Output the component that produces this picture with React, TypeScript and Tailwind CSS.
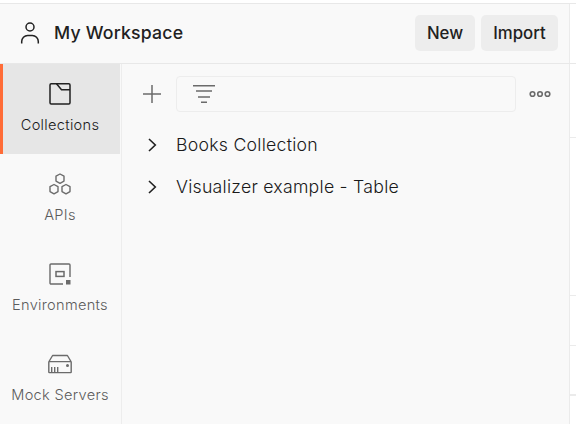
import type { ReactNode } from "react";

const CollectionIcon = () => (
  <svg width="24" height="24" viewBox="0 0 24 24" fill="none" stroke="#212121" strokeWidth="1.5" strokeLinejoin="round">
    <rect x="2" y="1.8" width="20" height="20.2" rx="1.2" />
    <path d="M8.5 1.8l5 6H22" />
  </svg>
);

const ApiIcon = () => (
  <svg width="24" height="24" viewBox="0 0 24 24" fill="none" stroke="#6b6b6b" strokeWidth="1.4" strokeLinejoin="round">
    <path d="M12 2l4 2.2v4.9L12 11.3 8 9.1V4.2z" />
    <path d="M6 12.5l4 2.2v4.9L6 21.8 2 19.6v-4.9z" />
    <path d="M18 12.5l4 2.2v4.9l-4 2.2-4-2.2v-4.9z" />
  </svg>
);

const EnvironmentIcon = () => (
  <svg width="24" height="24" viewBox="0 0 24 24" fill="none" stroke="#6b6b6b" strokeWidth="1.4">
    <path d="M15 22H3a1 1 0 0 1-1-1V3a1 1 0 0 1 1-1h18a1 1 0 0 1 1 1v12" />
    <rect x="8" y="9.6" width="8" height="4.8" strokeWidth="1.5" />
    <rect x="18" y="18" width="4.5" height="4.5" fill="#6b6b6b" stroke="none" />
  </svg>
);

const ServerIcon = () => (
  <svg width="24" height="24" viewBox="0 0 24 24" fill="none" stroke="#6b6b6b" strokeWidth="1.4" strokeLinejoin="round">
    <rect x="0.8" y="9.6" width="22.4" height="11" rx="0.5" />
    <path d="M1 9.5l3.6-6h14.8l3.6 6M3.7 15v5.5M6.7 15v5.5M9.7 15v5.5" />
    <circle cx="19.5" cy="13.5" r="1.5" fill="#6b6b6b" stroke="none" />
  </svg>
);

const navItems: { label: string; icon: ReactNode; active?: boolean }[] = [
  { label: "Collections", icon: <CollectionIcon />, active: true },
  { label: "APIs", icon: <ApiIcon /> },
  { label: "Environments", icon: <EnvironmentIcon /> },
  { label: "Mock Servers", icon: <ServerIcon /> },
];

const collections = ["Books Collection", "Visualizer example - Table"];

export default function App() {
  return (
    <div className="flex h-[424px] w-[576px] flex-col overflow-hidden bg-white pt-[3px] font-['Inter',sans-serif] text-[#212121]">
      <header className="flex h-[61px] shrink-0 border-y border-[#e8e8e8]">
        <div className="flex w-[570px] items-center border-r border-[#ebebeb] bg-[#f9f9f9] pr-[11px] pb-[2px] pl-[18px]">
          <svg width="24" height="24" viewBox="0 0 24 24" fill="none" stroke="#212121" strokeWidth="1.5">
            <circle cx="12" cy="6" r="4" />
            <path d="M3.7 22.5v-2a6 6 0 0 1 6-6h4.6a6 6 0 0 1 6 6v2" />
          </svg>
          <h1 className="ml-3 flex-1 text-[17.7px] leading-6 font-medium tracking-[0.2px]">My Workspace</h1>
          <div className="flex gap-1.5">
            <button className="h-9 w-[60px] rounded-[5px] bg-[#ededed] text-[16.8px] leading-6 font-medium">New</button>
            <button className="h-9 w-[77px] rounded-[5px] bg-[#ededed] text-[16.8px] leading-6 font-medium">Import</button>
          </div>
        </div>
      </header>
      <div className="flex min-h-0 flex-1">
        <nav className="w-[122px] shrink-0 border-r border-[#ededed] bg-[#f9f9f9]">
          {navItems.map(({ label, icon, active }) => (
            <div
              key={label}
              className={`flex h-[90px] w-[120px] flex-col items-center pt-[18px] ${
                active ? "bg-[#e6e6e6] text-[#1a1a1a] shadow-[inset_3px_0_0_#ff6c37]" : "text-[#5c5c5c]"
              }`}
            >
              {icon}
              <span className="mt-2 text-[14.6px] leading-[22px] font-light tracking-[0.3px] whitespace-nowrap">{label}</span>
            </div>
          ))}
        </nav>
        <main className="w-[448px] shrink-0 border-r border-[#ebebeb] bg-[#f9f9f9]">
          <div className="flex h-[60px] items-center">
            <svg className="ml-[21px]" width="18" height="18" viewBox="0 0 18 18" stroke="#6b6b6b" strokeWidth="1.5">
              <path d="M9 0v18M0 9h18" />
            </svg>
            <div className="ml-[15px] flex h-9 w-[340px] items-center rounded-[4px] border border-[#ededed] pl-4">
              <svg width="22" height="20" viewBox="0 0 22 20" stroke="#6b6b6b" strokeWidth="1.4">
                <path d="M0 1.8h22M3 7h16M5 13h12M8 18.2h6" />
              </svg>
            </div>
            <svg className="ml-[13px]" width="22" height="8" viewBox="0 0 22 8" fill="none" stroke="#6b6b6b" strokeWidth="1.6">
              <circle cx="3.5" cy="4" r="2.3" />
              <circle cx="11" cy="4" r="2.3" />
              <circle cx="18.5" cy="4" r="2.3" />
            </svg>
          </div>
          {collections.map((name) => (
            <div key={name} className="flex h-[42px] items-center pl-[26px]">
              <svg width="9" height="14" viewBox="0 0 9 14" fill="none" stroke="#212121" strokeWidth="1.6">
                <path d="M1 1l6.3 6L1 13" />
              </svg>
              <span className="ml-[19px] text-[17.7px] leading-6 font-light tracking-[0.25px] text-[#1a1a1a]">{name}</span>
            </div>
          ))}
        </main>
        <aside className="flex-1">
          <div className="h-[74px] border-b border-[#ebebeb]" />
          <div className="h-[158px] border-b border-[#ebebeb]" />
          <div className="h-[50px] border-b border-[#ebebeb]" />
          <div className="h-[50px] border-b-2 border-[#ebebeb]" />
        </aside>
      </div>
    </div>
  );
}
